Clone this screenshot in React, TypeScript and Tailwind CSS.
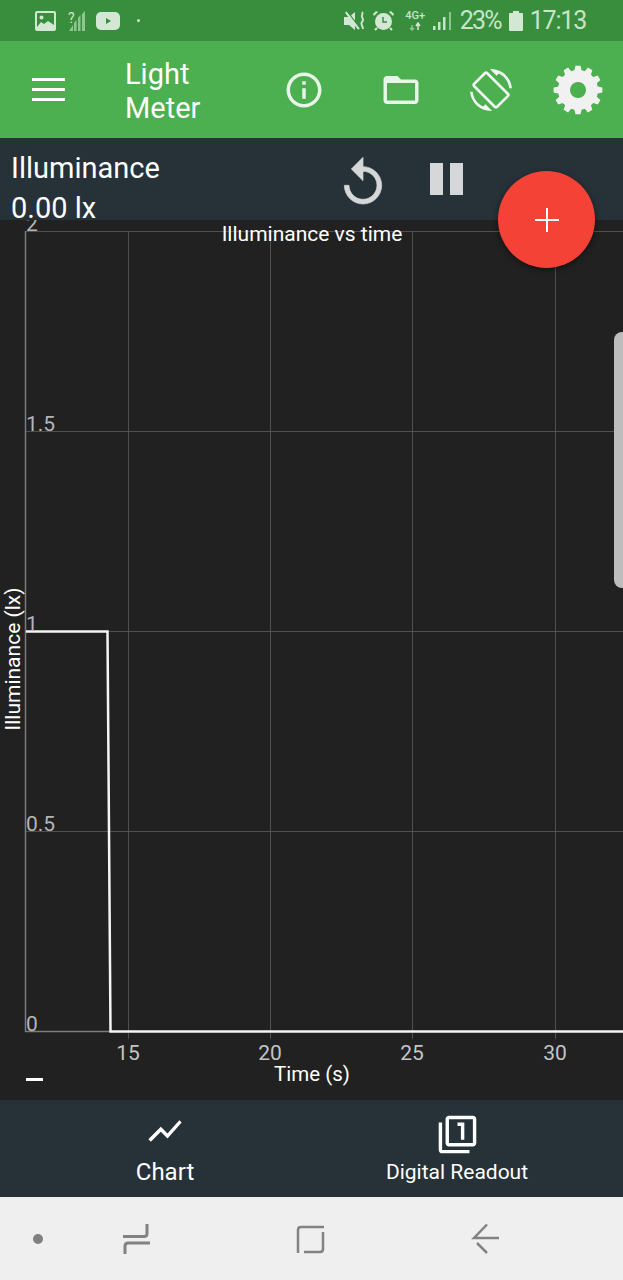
const font = { fontFamily: "Roboto, sans-serif" };

const gridX = [128, 270, 412, 555];
const gridY = [231, 431, 631, 831, 1031];
const xTicks = ["15", "20", "25", "30"];
const yTicks = ["2", "1.5", "1", "0.5", "0"];

function gearPath() {
  const teeth = 12;
  const pts: string[] = [];
  for (let i = 0; i < teeth; i++) {
    const step = (Math.PI * 2) / teeth;
    const a = i * step - Math.PI / 2;
    const corners: [number, number][] = [
      [a - step * 0.34, 20],
      [a - step * 0.2, 24.5],
      [a + step * 0.2, 24.5],
      [a + step * 0.34, 20],
    ];
    corners.forEach(([ang, r]) => {
      pts.push(`${(25 + r * Math.cos(ang)).toFixed(2)} ${(25 + r * Math.sin(ang)).toFixed(2)}`);
    });
  }
  return "M" + pts.join("L") + "Z M25 17a8 8 0 1 0 0.01 0Z";
}

function StatusBar() {
  return (
    <div className="flex h-[41px] items-center justify-between bg-[#388e3c] pl-[35px] pr-[37px] text-[#c9e4ca]">
      <div className="flex items-center">
        {/* picture */}
        <svg width="21" height="20" viewBox="0 0 21 20" fill="none">
          <rect x="1" y="1" width="19" height="18" rx="1" stroke="#d3e8d4" strokeWidth="2" />
          <circle cx="6.5" cy="6.5" r="2" fill="#d3e8d4" />
          <path d="M2 16l4-5 3 2 4-3 6 4v4H2z" fill="#d3e8d4" />
        </svg>
        {/* no sim signal */}
        <svg className="ml-[12px]" width="18" height="22" viewBox="0 0 18 22">
          <path d="M1 21l4-6v6zM6 21v-8l2.500-3v11zM10 21V8l2.500-3v16zM14 21V4l3-3v20z" fill="#8fc493" />
          <text x="0" y="13" fontSize="14" fill="#d3e8d4" style={font}>?</text>
        </svg>
        {/* youtube */}
        <svg className="ml-[10px]" width="24" height="18" viewBox="0 0 24 18">
          <rect width="24" height="18" rx="5" fill="#d3e8d4" />
          <path d="M10 6l5 3-5 3z" fill="#388e3c" />
        </svg>
        <div className="ml-[17px] size-[3px] rounded-full bg-[#d3e8d4]" />
      </div>
      <div className="flex items-center">
        {/* vibrate mute */}
        <svg width="22" height="20" viewBox="0 0 22 20" fill="#d3e8d4">
          <path d="M0 6h5l6-5v18l-6-5H0z" />
          <path d="M2 1l13 17" stroke="#d3e8d4" strokeWidth="2.500" />
          <path d="M3 0l13 17" stroke="#388e3c" strokeWidth="1.200" />
          <path d="M18 1c2 2-1 3 0 5s2 3 0 5 1 4 1 7" stroke="#d3e8d4" strokeWidth="1.800" fill="none" />
        </svg>
        {/* alarm */}
        <svg className="ml-[7px]" width="21" height="21" viewBox="0 0 21 21" fill="#d3e8d4">
          <path d="M1 6l4-4-2-1-3 3zM20 6l-4-4 2-1 3 3z" />
          <circle cx="10.500" cy="11.500" r="8.500" />
          <path d="M10 7v5h4" stroke="#388e3c" strokeWidth="1.500" fill="none" />
          <path d="M4 18l-2 2M17 18l2 2" stroke="#d3e8d4" strokeWidth="2" />
        </svg>
        {/* 4G+ */}
        <div className="ml-[10px] flex w-[23px] flex-col items-center leading-none">
          <span className="text-[11px] font-medium leading-[12px]" style={font}>4G+</span>
          <svg width="12" height="9" viewBox="0 0 12 9">
            <path d="M3 8V3M1 6l2 2 2-2" stroke="#8fc493" strokeWidth="1.500" fill="none" />
            <path d="M9 8V2M7 4l2-3 2 3" stroke="#d3e8d4" strokeWidth="1.500" fill="none" />
          </svg>
        </div>
        {/* signal */}
        <svg className="ml-[6px]" width="20" height="20" viewBox="0 0 20 20" fill="#c9e4ca">
          <rect x="0" y="15" width="2.500" height="4" />
          <rect x="5" y="11" width="2.500" height="8" />
          <rect x="10" y="6" width="2.500" height="13" />
          <rect x="16" y="1" width="2" height="18" fill="#8fc493" />
        </svg>
        <span className="ml-[7px] text-[25px] leading-none tracking-[-1.8px]" style={font}>23%</span>
        <svg className="ml-[8px]" width="14" height="20" viewBox="0 0 14 20">
          <path d="M4 0h6v2h3a1 1 0 0 1 1 1v16a1 1 0 0 1-1 1H1a1 1 0 0 1-1-1V3a1 1 0 0 1 1-1h3z" fill="#d3e8d4" />
        </svg>
        <span className="ml-[7px] text-[25px] leading-none tracking-[-1.2px]" style={font}>17:13</span>
      </div>
    </div>
  );
}

function Toolbar() {
  return (
    <div className="flex h-[97px] items-center bg-[#4caf50] text-white">
      <div className="ml-[32px] flex w-[33px] flex-col gap-[7px]">
        <div className="h-[3px] bg-white" />
        <div className="h-[3px] bg-white" />
        <div className="h-[3px] bg-white" />
      </div>
      <div className="ml-[60px] w-[100px] pt-[2px] text-[29px] leading-[34px]" style={font}>
        Light Meter
      </div>
      <svg className="ml-[58px]" width="42" height="42" viewBox="0 0 24 24" fill="#e8f5e9">
        <path d="M11 7h2v2h-2zm0 4h2v6h-2zm1-9C6.480 2 2 6.480 2 12s4.480 10 10 10 10-4.480 10-10S17.520 2 12 2zm0 18c-4.410 0-8-3.590-8-8s3.590-8 8-8 8 3.590 8 8-3.590 8-8 8z" />
      </svg>
      <svg className="ml-[55px]" width="42" height="42" viewBox="0 0 24 24" fill="#e8f5e9">
        <path d="M20 6h-8l-2-2H4c-1.100 0-1.990.9-1.990 2L2 18c0 1.100.9 2 2 2h16c1.100 0 2-.9 2-2V8c0-1.100-.9-2-2-2zm0 12H4V8h16v10z" />
      </svg>
      <svg className="ml-[48px]" width="42" height="42" viewBox="0 0 24 24" fill="#f1f8f1">
        <path d="M16.480 2.520c3.270 1.550 5.610 4.720 5.970 8.480h1.500C23.440 4.840 18.290 0 12 0l-.66.03 3.810 3.810 1.330-1.320zm-6.250-.77c-.59-.59-1.540-.59-2.120 0L1.750 8.110c-.59.59-.59 1.540 0 2.120l12.020 12.020c.59.59 1.540.59 2.120 0l6.360-6.360c.59-.59.59-1.540 0-2.120L10.230 1.750zm4.600 19.440L2.810 9.170l6.360-6.360 12.020 12.020-6.360 6.360zm-7.310.29C4.250 19.940 1.910 16.760 1.550 13H.05C.56 19.160 5.710 24 12 24l.66-.03-3.810-3.810-1.330 1.320z" />
      </svg>
      <svg className="ml-[41px]" width="50" height="50" viewBox="0 0 50 50" fill="#f1f1f1">
        <path fillRule="evenodd" d={gearPath()} />
      </svg>
    </div>
  );
}

function ValuePanel() {
  return (
    <div className="relative z-10 flex h-[82px] bg-[#263238]">
      <div className="ml-[11px] w-[300px] pt-[11px] text-[29px] leading-[39px] text-white" style={font}>
        <div>Illuminance</div>
        <div className="pt-[1px]">0.00 lx</div>
      </div>
      <svg className="ml-[24px] mt-[17px]" width="56" height="56" viewBox="0 0 24 24" fill="#d5d7d8" stroke="#d5d7d8" strokeWidth="0.3">
        <path d="M12 5V1L7 6l5 5V7c3.310 0 6 2.690 6 6s-2.690 6-6 6-6-2.690-6-6H4c0 4.420 3.580 8 8 8s8-3.580 8-8-3.580-8-8-8z" />
      </svg>
      <div className="ml-[39px] mt-[25px] flex h-[32px] gap-[7px]">
        <div className="w-[13px] bg-[#d5d7d8]" />
        <div className="w-[13px] bg-[#d5d7d8]" />
      </div>
    </div>
  );
}

function Chart() {
  return (
    <div className="relative h-[880px] overflow-hidden bg-[#212121]">
      <svg width="623" height="880" viewBox="0 220 623 880" style={font}>
        {gridX.map((x) => (
          <line key={x} x1={x + 0.5} y1="231" x2={x + 0.5} y2="1039" stroke="#505050" strokeWidth="1" />
        ))}
        {gridY.map((y) => (
          <line key={y} x1="25" y1={y + 0.5} x2="623" y2={y + 0.5} stroke="#505050" strokeWidth="1" />
        ))}
        <line x1="25.500" y1="231" x2="25.500" y2="1032" stroke="#7c7c7c" strokeWidth="1.500" />
        <line x1="25" y1="1031.500" x2="110" y2="1031.500" stroke="#7c7c7c" strokeWidth="1.500" />
        <path d="M26 631.500H107.500L110.500 1031.500H623" fill="none" stroke="#f5f5f5" strokeWidth="2.500" />
        {yTicks.map((t, i) => (
          <text key={t} x="26" y={gridY[i] - 0.5} fontSize="21" fill="#b4b4b4">{t}</text>
        ))}
        {xTicks.map((t, i) => (
          <text key={t} x={gridX[i]} y="1060" fontSize="21" fill="#c4c4c4" textAnchor="middle">{t}</text>
        ))}
        <text x="312" y="240.500" fontSize="21" fill="#ffffff" textAnchor="middle">Illuminance vs time</text>
        <text x="312" y="1080.500" fontSize="20.500" fill="#ffffff" textAnchor="middle">Time (s)</text>
        <text transform="translate(20 659) rotate(-90)" fontSize="21" fill="#ffffff" textAnchor="middle">Illuminance (lx)</text>
        <rect x="26" y="1078" width="17" height="3" fill="#ffffff" />
      </svg>
      {/* drawer handle */}
      <div className="absolute right-0 top-[112px] h-[256px] w-[9px] rounded-l-[8px] bg-[#bdbdbd]" />
    </div>
  );
}

function BottomNav() {
  return (
    <div className="flex h-[97px] bg-[#263238] text-white" style={font}>
      <div className="flex w-[330px] flex-col items-center pt-[12px]">
        <svg width="40" height="40" viewBox="0 0 24 24" fill="#ffffff" className="-mt-[1px]">
          <path d="M3.500 18.490l6-6.010 4 4L22 6.920l-1.410-1.410-7.090 7.970-4-4L2 16.990z" />
        </svg>
        <div className="mt-[5px] text-[24px] leading-[32px]">Chart</div>
      </div>
      <div className="flex flex-1 flex-col items-center pr-[39px] pt-[14px]">
        <svg width="41" height="41" viewBox="0 0 24 24" fill="#ffffff">
          <path d="M3 5H1v16c0 1.100.9 2 2 2h16v-2H3V5zm11 10h2V5h-4v2h2v8zm7-14H7c-1.100 0-2 .9-2 2v14c0 1.100.9 2 2 2h14c1.100 0 2-.9 2-2V3c0-1.100-.9-2-2-2zm0 16H7V3h14v14z" />
        </svg>
        <div className="mt-[1px] text-[21px] leading-[32px]">Digital Readout</div>
      </div>
    </div>
  );
}

function SystemNav() {
  return (
    <div className="flex h-[83px] items-center bg-[#efefef]">
      <div className="ml-[33px] size-[10px] rounded-full bg-[#808080]" />
      <svg className="ml-[79px]" width="30" height="32" viewBox="0 0 30 32" fill="none" stroke="#828282" strokeWidth="3">
        <path d="M1 13.500H22q3 0 3-3V1" />
        <path d="M28 20H6q-3 0-3 3v8" />
      </svg>
      <svg className="ml-[143px]" width="32" height="32" viewBox="0 0 32 32" fill="none" stroke="#828282" strokeWidth="2.500">
        <path d="M3 30V7q0-3 3-3H29" />
        <path d="M28 9V26q0 3-3 3H9" />
      </svg>
      <svg className="ml-[144px]" width="30" height="32" viewBox="0 0 30 32" fill="none" stroke="#828282" strokeWidth="2.500">
        <path d="M28 15H3L16 1.500" />
        <path d="M6 20L16 30" />
      </svg>
    </div>
  );
}

export default function App() {
  return (
    <div className="relative h-[1280px] w-[623px] overflow-hidden bg-[#212121]">
      <StatusBar />
      <Toolbar />
      <ValuePanel />
      <Chart />
      <BottomNav />
      <SystemNav />
      <button className="absolute left-[498px] top-[171px] z-20 flex size-[97px] items-center justify-center rounded-full bg-[#f44336] shadow-[0_2px_6px_rgba(0,0,0,0.45)]">
        <svg width="24" height="24" viewBox="0 0 24 24" stroke="#ffffff" strokeWidth="2">
          <path d="M0 12H24M12 0V24" />
        </svg>
      </button>
    </div>
  );
}
